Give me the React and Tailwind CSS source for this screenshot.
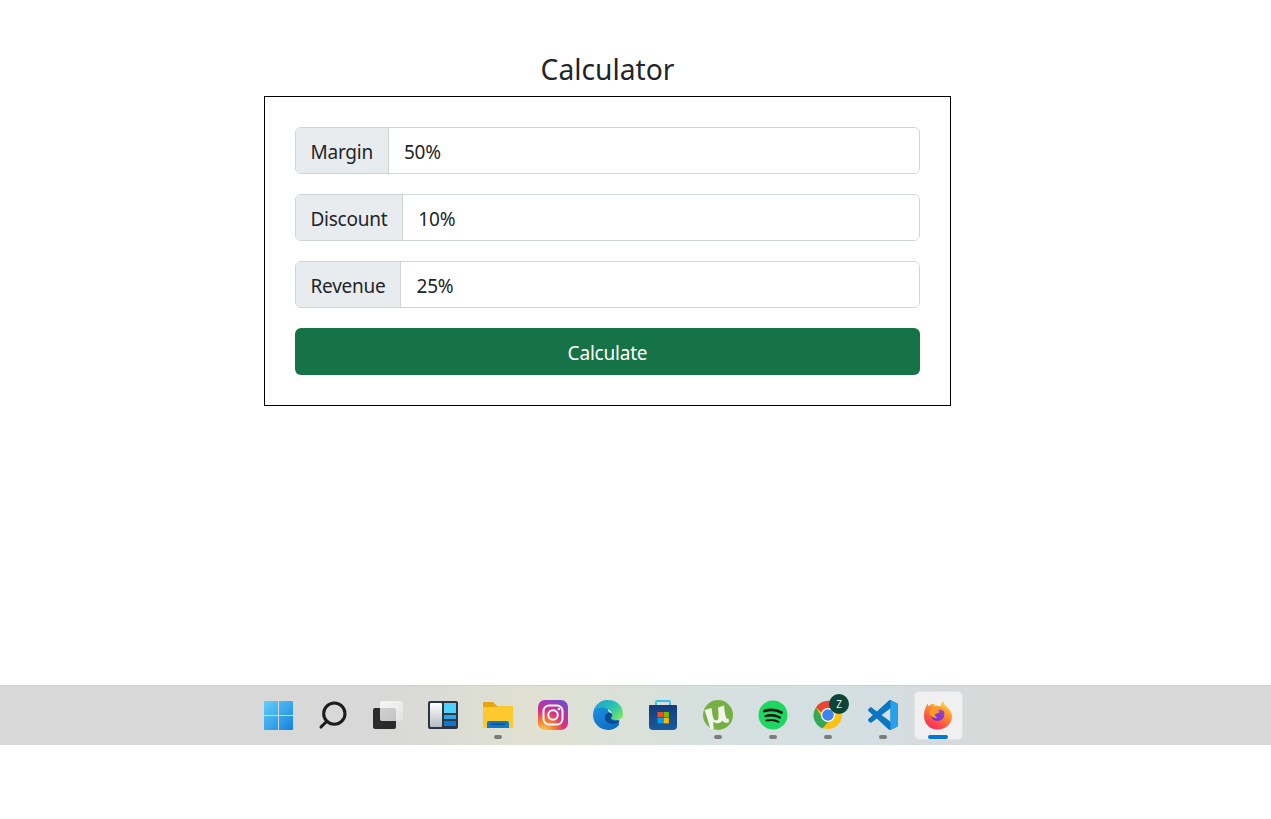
import React from "react";
import { Search } from "lucide-react";

const font = { fontFamily: '"Noto Sans", "Open Sans", sans-serif' };

function Field({ label, value }) {
	return (
		<div className="flex h-[47px] w-full rounded-[6px] border border-[#ced4da] overflow-hidden">
			<span className="flex items-center pl-[14.5px] pr-[15px] pt-[4px] bg-[#e9ecef] border-r border-[#ced4da] text-[#212529] text-[19px] tracking-[-0.25px]">
				{label}
			</span>
			<input
				readOnly
				value={value}
				className="flex-1 min-w-0 bg-white px-[15px] pt-[4px] text-[#212529] text-[19px] tracking-[-0.2px] outline-none"
			/>
		</div>
	);
}

function WindowsIcon() {
	return (
		<svg width="30" height="30" viewBox="0 0 30 30">
			<defs>
				<linearGradient id="win" x1="0" y1="0" x2="1" y2="1">
					<stop offset="0" stopColor="#62d0fb" />
					<stop offset="1" stopColor="#1482dc" />
				</linearGradient>
			</defs>
			<path fill="url(#win)" d="M1 2a1 1 0 0 1 1-1h13v14H1zM16 1h13a1 1 0 0 1 1 1v13H16zM1 16h14v14H2a1 1 0 0 1-1-1zM16 16h14v13a1 1 0 0 1-1 1H16z" />
		</svg>
	);
}

function TaskViewIcon() {
	return (
		<svg width="30" height="30" viewBox="0 0 30 30">
			<defs>
				<linearGradient id="tvLight" x1="0" y1="0" x2="1" y2="1">
					<stop offset="0" stopColor="#ffffff" />
					<stop offset="1" stopColor="#e4e4e4" />
				</linearGradient>
			</defs>
			<rect x="0" y="8" width="23" height="21" rx="2" fill="#2b2b2b" />
			<rect x="7" y="1" width="23" height="20" rx="2" fill="url(#tvLight)" fillOpacity="0.8" />
		</svg>
	);
}

function WidgetsIcon() {
	return (
		<svg width="30" height="30" viewBox="0 0 30 30">
			<defs>
				<linearGradient id="wgLeft" x1="0" y1="0" x2="0" y2="1">
					<stop offset="0" stopColor="#ffffff" />
					<stop offset="1" stopColor="#b8bcc0" />
				</linearGradient>
			</defs>
			<rect x="0" y="1" width="30" height="28" rx="2" fill="#2d3640" />
			<rect x="2" y="3" width="12" height="24" rx="1" fill="url(#wgLeft)" />
			<rect x="16" y="3" width="12" height="10" fill="#4cd2fb" />
			<rect x="16" y="15" width="12" height="4" fill="#2aa8e8" />
			<rect x="16" y="21" width="12" height="5" fill="#0a78d8" />
		</svg>
	);
}

function FolderIcon() {
	return (
		<svg width="30" height="30" viewBox="0 0 30 30">
			<path fill="#e6a510" d="M0 3a1 1 0 0 1 1-1h9l4 4h16v5H0z" />
			<path fill="#fdc92f" d="M0 7h13l3-1h14v21a1 1 0 0 1-1 1H1a1 1 0 0 1-1-1z" />
			<path fill="#0f78c8" d="M4 23a2 2 0 0 1 2-2h18a2 2 0 0 1 2 2v5H4z" />
			<rect x="8" y="23.500" width="14" height="1.500" fill="#0a4f8e" />
		</svg>
	);
}

function InstagramIcon() {
	return (
		<svg width="30" height="30" viewBox="0 0 30 30">
			<defs>
				<radialGradient id="ig" cx="0.2" cy="1.05" r="1.25">
					<stop offset="0" stopColor="#fdd35a" />
					<stop offset="0.3" stopColor="#f8792c" />
					<stop offset="0.55" stopColor="#d9317f" />
					<stop offset="0.8" stopColor="#a23bb8" />
					<stop offset="1" stopColor="#5b55cf" />
				</radialGradient>
			</defs>
			<rect width="30" height="30" rx="7" fill="url(#ig)" />
			<rect x="5.500" y="5.500" width="19" height="19" rx="5.500" fill="none" stroke="#fff" strokeWidth="2" />
			<circle cx="15" cy="15" r="4.800" fill="none" stroke="#fff" strokeWidth="2" />
			<circle cx="21" cy="9" r="1.300" fill="#fff" />
		</svg>
	);
}

function EdgeIcon() {
	return (
		<svg width="32" height="32" viewBox="0 0 32 32">
			<defs>
				<linearGradient id="edgeTop" x1="0" y1="0" x2="1" y2="0.7">
					<stop offset="0" stopColor="#1c9ed8" />
					<stop offset="0.6" stopColor="#2cc3b0" />
					<stop offset="1" stopColor="#6fe36a" />
				</linearGradient>
				<linearGradient id="edgeBot" x1="0" y1="0" x2="0.6" y2="1">
					<stop offset="0" stopColor="#1f9ae4" />
					<stop offset="1" stopColor="#0f6cc4" />
				</linearGradient>
			</defs>
			<path fill="url(#edgeBot)" d="M16 1A15 15 0 0 0 1 16a15 15 0 0 0 15 15c4.500 0 8-1.500 11-5v-4L16 12z" />
			<path fill="url(#edgeTop)" d="M2 11C4 5 10 1 16 1c9 0 15 6 15 14 0 4-3 6-7 6-3 0-5-1-5-2 1.500-1 2-3 1-5C17 9 8 7 2 11z" />
			<path fill="#0c4a94" d="M19 14c-4-1-6.500 2-6 6 1 3.500 6 6 10.500 4.500 2-.5 3.500-2 4.500-3.500-2 1.500-6 1.500-8 0-2-1.500-2-3-.5-4 1.200-1 1.200-2.200-.5-3z" />
		</svg>
	);
}

function StoreIcon() {
	return (
		<svg width="30" height="30" viewBox="0 0 30 30">
			<defs>
				<linearGradient id="storeBody" x1="0" y1="0" x2="0" y2="1">
					<stop offset="0" stopColor="#123c78" />
					<stop offset="1" stopColor="#1a5a9e" />
				</linearGradient>
			</defs>
			<path d="M8 5.500V2a1 1 0 0 1 1-1h12a1 1 0 0 1 1 1v3.500" fill="none" stroke="#2fc0f0" strokeWidth="1.800" />
			<path fill="url(#storeBody)" d="M2 5h26a1 1 0 0 1 1 1v20a4 4 0 0 1-4 4H5a4 4 0 0 1-4-4V6a1 1 0 0 1 1-1z" />
			<rect x="9.500" y="12" width="5.400" height="5.400" fill="#ef4f27" />
			<rect x="15.500" y="12" width="5.400" height="5.400" fill="#7eb900" />
			<rect x="9.500" y="18" width="5.400" height="5.400" fill="#00a2ed" />
			<rect x="15.500" y="18" width="5.400" height="5.400" fill="#ffb700" />
		</svg>
	);
}

function UtorrentIcon() {
	return (
		<svg width="30" height="30" viewBox="0 0 30 30">
			<circle cx="15" cy="15" r="15" fill="#76b043" />
			<path
				fill="#f2f5ee"
				d="M1.500 10l7-2c.5 4 1 8 2 10.500.8 2 3 2.500 4.500 1 1-1.500.5-7 0-12l6-2c.5 5 1 9 2 12 .3 1 1 1.500 2.500 1l.5 3.500c-2 1.500-5.500 1-6.500-1.500-2 3.500-7 3.500-9 1-.5 2-.2 4.500.5 7l-3.500 1C5 21 3.500 15 1.500 10z"
			/>
		</svg>
	);
}

function SpotifyIcon() {
	return (
		<svg width="30" height="30" viewBox="0 0 30 30">
			<circle cx="15" cy="15" r="14.500" fill="#1ed760" />
			<g fill="none" stroke="#121212" strokeLinecap="round">
				<path d="M6.500 11c6-1.700 12-1.200 17 1.500" strokeWidth="2.800" />
				<path d="M7.500 16c5-1.300 10-.8 14.500 1.500" strokeWidth="2.300" />
				<path d="M8.500 20.500c4.500-1 8.500-.6 12 1.300" strokeWidth="1.900" />
			</g>
		</svg>
	);
}

function ChromeIcon() {
	return (
		<svg width="30" height="30" viewBox="0 0 30 30">
			<circle cx="15" cy="15" r="14" fill="#fbc116" />
			<path fill="#ea4335" d="M3 7.500A14 14 0 0 1 27.100 8H15a7 7 0 0 0-6.500 4.500z" />
			<path fill="#34a853" d="M3 7.500l6.500 11a7 7 0 0 0 5.500 3.500L9.500 28.500A14 14 0 0 1 3 7.500z" />
			<circle cx="15" cy="15" r="7" fill="#fff" />
			<circle cx="15" cy="15" r="5.800" fill="#3f83ee" />
		</svg>
	);
}

function VSCodeIcon() {
	return (
		<svg width="30" height="30" viewBox="0 0 100 100">
			<path
				fill="#0a76c2"
				fillRule="evenodd"
				d="M70.900 99.300c1.600.6 3.400.6 5-.2l20.600-9.900c2.100-1 3.500-3.200 3.500-5.600V16.400c0-2.400-1.400-4.600-3.500-5.600L75.900.9c-2.100-1-4.600-.8-6.400.5-.3.2-.5.4-.7.7L29.400 38 12.200 25c-1.600-1.200-3.800-1.100-5.300.2l-5.500 5c-1.800 1.700-1.800 4.500 0 6.200L16.200 50 1.400 63.600c-1.800 1.700-1.800 4.500 0 6.200l5.500 5c1.500 1.300 3.700 1.400 5.300.2l17.200-13 39.400 36c.6.600 1.300 1 2.100 1.300zM75 27.300L45.100 50 75 72.700z"
			/>
			<path
				fill="#28a0ec"
				d="M72 .3c1.400-.2 2.700.1 3.900.6l20.600 9.900c2.100 1 3.500 3.200 3.500 5.600v67.200c0 2.400-1.400 4.600-3.500 5.600l-20.600 9.900c-1.600.8-3.400.8-5 .2 2.500.9 4.100-1.300 4.100-4.300V5C75 2 74 .5 72 .3z"
			/>
		</svg>
	);
}

function FirefoxIcon() {
	return (
		<svg width="30" height="30" viewBox="0 0 30 30">
			<defs>
				<linearGradient id="ffBody" x1="0.8" y1="0" x2="0.25" y2="1">
					<stop offset="0" stopColor="#ffe14a" />
					<stop offset="0.35" stopColor="#ff9a2a" />
					<stop offset="0.75" stopColor="#ff4a4a" />
					<stop offset="1" stopColor="#f5286a" />
				</linearGradient>
				<linearGradient id="ffCore" x1="0.8" y1="0" x2="0.2" y2="1">
					<stop offset="0" stopColor="#9a4ad8" />
					<stop offset="1" stopColor="#7a2fbb" />
				</linearGradient>
			</defs>
			<path fill="url(#ffBody)" d="M2.500 8c.5-2 1.500-3.500 2.500-4.500-.2 1 0 2 .5 2.800C7.500 4.500 9.500 3.500 12 4c-1 .5-1.500 1-2 1.700 3-.5 5.500-.2 7.500 1 0-2 1-4 3-5.700 0 2.500 1 3.500 3 5.500 3 3 5.500 6 5.500 9.500 0 8-6.500 13.500-14.500 13.500S1 23.500 1 15.500C1 13 1.500 10 2.500 8z" />
			<circle cx="14.500" cy="14" r="7" fill="url(#ffCore)" />
			<path fill="#ff9a2a" d="M6 12.500c1-4 5-6.500 9.500-5.500 3 .7 5 2.500 5.500 4.500-2-1.500-4.500-2.200-6.500-1.500 1.500.5 2 1.500 1.500 2.500-1 .8-2.500 1-3.500 1.200-1 1-.5 3 2 4-4 1-7.500-1-8.500-5.200z" />
		</svg>
	);
}

function TaskbarItem({ children, dot, active }) {
	return (
		<div className="relative w-[55px] h-full flex items-center justify-center pb-[1px]">
			{active && (
				<div className="absolute left-[3.5px] top-[5px] w-[49px] h-[49px] rounded-[5px] bg-[#f0f0f0] border border-[#e2e2e2]" />
			)}
			<div className="relative flex items-center justify-center">{children}</div>
			{dot && (
				<div className="absolute left-[23.5px] top-[49px] w-[8px] h-[4px] rounded-full bg-[#7c7c7c]" />
			)}
			{active && (
				<div className="absolute left-[17.5px] top-[49px] w-[20px] h-[4px] rounded-full bg-[#0078d4]" />
			)}
		</div>
	);
}

export default function App() {
	return (
		<div className="w-[1271px] h-[819px] bg-white flex flex-col overflow-hidden" style={font}>
			<div className="w-[687px] ml-[264px] pt-[46px]">
				<h1 className="text-center text-[#212529] text-[28.2px] leading-[47px] mb-[3px] font-normal">
					Calculator
				</h1>
				<div className="border border-black px-[30px] py-[30px] flex flex-col gap-[20px]">
					<Field label="Margin" value="50%" />
					<Field label="Discount" value="10%" />
					<Field label="Revenue" value="25%" />
					<button className="h-[47px] pt-[4px] rounded-[6px] bg-[#157347] text-white text-[19px] tracking-[-0.2px]">
						Calculate
					</button>
				</div>
			</div>

			<div className="mt-[279px] h-[60px] flex pl-[250.5px] border-t border-[#cfcfcf] bg-[linear-gradient(90deg,#d8d8d8_0%,#d8d8d8_30%,#e0e1d2_42%,#d6e0de_55%,#d4dfe3_68%,#d8d8d8_78%,#d8d8d8_100%)]">
				<TaskbarItem><WindowsIcon /></TaskbarItem>
				<TaskbarItem><Search size={32} strokeWidth={2.3} color="#1c1c1c" className="-scale-x-100" /></TaskbarItem>
				<TaskbarItem><TaskViewIcon /></TaskbarItem>
				<TaskbarItem><WidgetsIcon /></TaskbarItem>
				<TaskbarItem dot><FolderIcon /></TaskbarItem>
				<TaskbarItem><InstagramIcon /></TaskbarItem>
				<TaskbarItem><EdgeIcon /></TaskbarItem>
				<TaskbarItem><StoreIcon /></TaskbarItem>
				<TaskbarItem dot><UtorrentIcon /></TaskbarItem>
				<TaskbarItem dot><SpotifyIcon /></TaskbarItem>
				<TaskbarItem dot>
					<ChromeIcon />
					<span className="absolute left-[16px] top-[-6px] w-[20px] h-[20px] rounded-full bg-[#0d4436] text-[#e8f0ec] text-[10px] flex items-center justify-center">
						Z
					</span>
				</TaskbarItem>
				<TaskbarItem dot><VSCodeIcon /></TaskbarItem>
				<TaskbarItem active><FirefoxIcon /></TaskbarItem>
			</div>
		</div>
	);
}
